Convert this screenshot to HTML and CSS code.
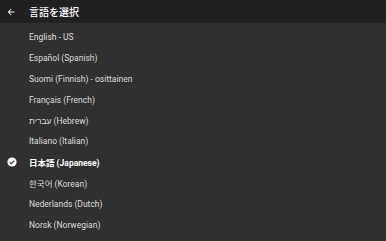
FILE: index.html
```html
<!DOCTYPE html>
<html>
<head>
    <meta charset="UTF-8">
    <title>言語を選択</title>
    <link rel="stylesheet" href="styles.css">
</head>
<body>
    <div class="lang-page">
        <div class="lang-header">
            <span class="back-btn">
                <svg width="10" height="10" viewBox="0 0 24 24"><path d="M20 11H7.83l5.59-5.59L12 4l-8 8 8 8 1.41-1.41L7.83 13H20v-2z" fill="#fff"/></svg>
            </span>
            <h2>言語を選択</h2>
        </div>

        <ul class="lang-list">
            <li class="lang-item"><span>English - US</span></li>
            <li class="lang-item"><span>Español (Spanish)</span></li>
            <li class="lang-item"><span>Suomi (Finnish) - osittainen</span></li>
            <li class="lang-item"><span>Français (French)</span></li>
            <li class="lang-item"><span><bdi>עברית</bdi> (Hebrew)</span></li>
            <li class="lang-item"><span>Italiano (Italian)</span></li>
            <li class="lang-item selected">
                <span class="check">
                    <svg width="10" height="10" viewBox="0 0 24 24"><circle cx="12" cy="12" r="11" fill="#fff"/><path d="M6.5 12.5l3.5 3.5 7.5-7.5" stroke="#303030" stroke-width="2.6" fill="none"/></svg>
                </span>
                <span>日本語 (Japanese)</span>
            </li>
            <li class="lang-item"><span>한국어 (Korean)</span></li>
            <li class="lang-item"><span>Nederlands (Dutch)</span></li>
            <li class="lang-item"><span>Norsk (Norwegian)</span></li>
        </ul>
    </div>
</body>
</html>
```

FILE: styles.css
```css
body {
    margin: 0;
    background-color: #303030;
    font-family: Roboto, "Noto Sans CJK JP", sans-serif;
}

.lang-page {
    width: 386px;
    height: 241px;
    overflow: hidden;
}

.lang-header {
    display: flex;
    align-items: center;
    height: 23px;
    background-color: #212121;
}

.back-btn {
    display: flex;
    width: 29px;
    padding-left: 6px;
    box-sizing: border-box;
}

.lang-header h2 {
    margin: 0;
    color: #fff;
    font-size: 10px;
    font-weight: 500;
}

.lang-list {
    list-style: none;
    margin: 0;
    padding: 4px 0 0 0;
}

.lang-item {
    position: relative;
    display: flex;
    align-items: center;
    height: 20.8px;
    padding-left: 29px;
    color: #dcdcdc;
    font-size: 8.5px;
}

.lang-item.selected {
    color: #fff;
    font-weight: bold;
}

.check {
    position: absolute;
    left: 7px;
    top: 5px;
    display: flex;
}
```
